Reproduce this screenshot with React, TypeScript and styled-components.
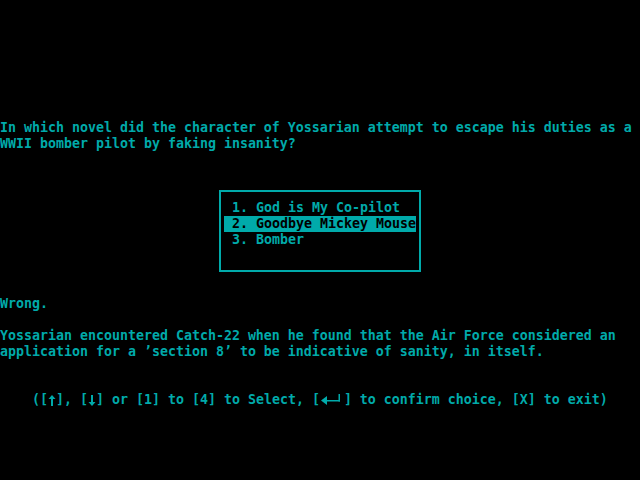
import * as React from "react";
import styled, { createGlobalStyle } from "styled-components";

const Colors = {
  bg: "#000000",
  text: "#00aaaa"
};

const GlobalStyle = createGlobalStyle`
  html, body {
    margin: 0;
    padding: 0;
    background: ${Colors.bg};
  }
`;

const Screen = styled.div`
  width: 640px;
  height: 480px;
  box-sizing: border-box;
  padding-top: 120px;
  background: ${Colors.bg};
  color: ${Colors.text};
  font-family: "DejaVu Sans Mono", "Liberation Mono", monospace;
  font-size: 13.29px;
  font-weight: bold;
  overflow: hidden;
`;

const Line = styled.div<{ $indent?: number }>`
  height: 16px;
  line-height: 16px;
  white-space: pre;
  padding-left: ${p => (p.$indent || 0) * 8}px;
`;

const Block = styled.div<{ $gap: number }>`
  margin-top: ${p => p.$gap}px;
`;

const MenuBox = styled.div`
  margin: 38px 0 0 219px;
  width: 202px;
  box-sizing: border-box;
  border: 2px solid ${Colors.text};
  padding: 8px 3px 22px 3px;
`;

const MenuItem = styled.div<{ $selected?: boolean }>`
  height: 16px;
  line-height: 16px;
  white-space: pre;
  padding-left: 8px;
  background: ${p => (p.$selected ? Colors.text : "transparent")};
  color: ${p => (p.$selected ? Colors.bg : Colors.text)};
`;

// character-cell sized glyph drawings (8px per cell, 16px tall)
const Glyph = styled.svg`
  display: inline-block;
  vertical-align: top;
  height: 16px;
  fill: ${Colors.text};
`;

const UpArrow = () => (
  <Glyph width={8} viewBox="0 0 8 16">
    <polygon points="4,3 0.5,7 7.5,7" />
    <rect x={3} y={6} width={2} height={8} />
  </Glyph>
);

const DownArrow = () => (
  <Glyph width={8} viewBox="0 0 8 16">
    <rect x={3} y={3} width={2} height={8} />
    <polygon points="4,14 0.5,10 7.5,10" />
  </Glyph>
);

const EnterKey = () => (
  <Glyph width={24} viewBox="0 0 24 16">
    <polygon points="1,8.5 7,4 7,13" />
    <rect x={7} y={8} width={13} height={1.5} />
    <rect x={18.5} y={2} width={1.5} height={7.5} />
  </Glyph>
);

const choices = ["God is My Co-pilot", "Goodbye Mickey Mouse", "Bomber"];

const App: React.FC = () => {
  const selected = 1;
  return (
    <Screen>
      <GlobalStyle />
      <Line>
        In which novel did the character of Yossarian attempt to escape his duties as a
      </Line>
      <Line>WWII bomber pilot by faking insanity?</Line>
      <MenuBox>
        {choices.map((c, i) => (
          <MenuItem key={c} $selected={i === selected}>
            {`${i + 1}. ${c}`}
          </MenuItem>
        ))}
      </MenuBox>
      <Block $gap={24}>
        <Line>Wrong.</Line>
      </Block>
      <Block $gap={16}>
        <Line>
          Yossarian encountered Catch-22 when he found that the Air Force considered an
        </Line>
        <Line>
          application for a ’section 8’ to be indicative of sanity, in itself.
        </Line>
      </Block>
      <Block $gap={32}>
        <Line $indent={4}>
          ([<UpArrow />], [<DownArrow />] or [1] to [4] to Select, [<EnterKey />] to confirm
          choice, [X] to exit)
        </Line>
      </Block>
    </Screen>
  );
};

export default App;
